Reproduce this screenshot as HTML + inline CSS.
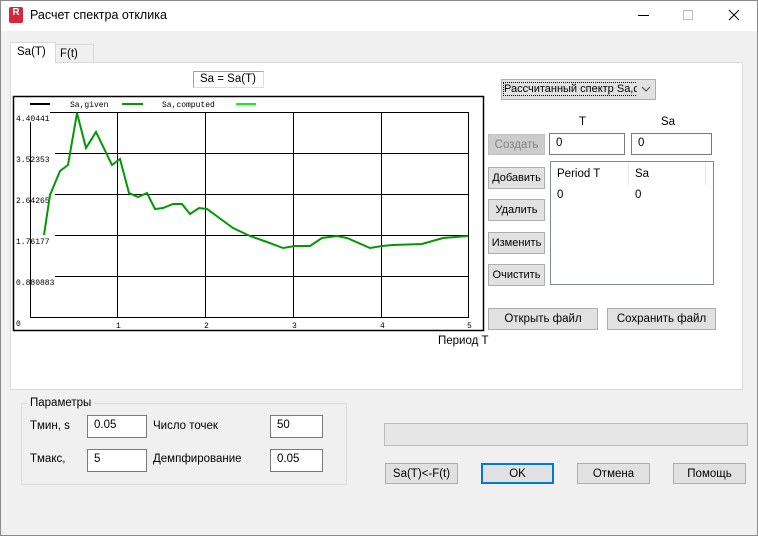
<!DOCTYPE html>
<html><head><meta charset="utf-8"><style>
*{box-sizing:border-box;margin:0;padding:0}
body{width:758px;height:536px;overflow:hidden;background:#f0f0f0;font-family:"Liberation Sans",sans-serif;font-size:11.5px;color:#000;position:relative}
.a{position:absolute;white-space:nowrap}
.btn{position:absolute;background:#e1e1e1;border:1px solid #adadad;text-align:center;font-size:11.5px;line-height:21px;white-space:nowrap;overflow:hidden}
.inp{position:absolute;background:#fff;border:1px solid #7a7a7a;padding-left:6px;line-height:19px;font-size:11.5px}
</style></head><body>
<div class="a" style="left:0;top:0;width:758px;height:536px;border:1px solid #8a8a8a"></div>
<div class="a" style="left:1px;top:1px;width:756px;height:30px;background:#fff"></div>
<div class="a" style="left:9px;top:7px;width:14px;height:16px;background:#d8263a;border-radius:2px;color:#fff;font-size:10px;font-weight:bold;text-align:center;line-height:12px">R</div>
<div class="a" style="left:30px;top:8px;font-size:12.5px">Расчет спектра отклика</div>
<div class="a" style="left:638px;top:15px;width:11px;height:1px;background:#000"></div>
<div class="a" style="left:683px;top:10px;width:10px;height:10px;border:1px solid #bbb"></div>
<svg class="a" style="left:728px;top:9px" width="12" height="12"><path d="M1 1L11 11M11 1L1 11" stroke="#000" stroke-width="1"/></svg>
<div class="a" style="left:10px;top:62px;width:733px;height:328px;background:#fff;border:1px solid #d9d9d9"></div>
<div class="a" style="left:55px;top:44px;width:39px;height:19px;background:#f0f0f0;border:1px solid #d9d9d9;padding:3px 4px">F(t)</div>
<div class="a" style="left:10px;top:42px;width:46px;height:21px;background:#fff;border:1px solid #d9d9d9;border-bottom:none;padding:3px 6px">Sa(T)</div>
<div class="a" style="left:193px;top:71px;width:71px;height:17px;border:1px solid #a0a0a0;border-right-color:#ddd;border-bottom-color:#ddd;padding:1px 6px;font-size:11.5px">Sa = Sa(T)</div>
<svg class="a" style="left:0;top:0" width="490" height="350">
<rect x="13.5" y="96.5" width="470" height="234" fill="#fff" stroke="#000" stroke-width="1.5"/>
<line x1="30" y1="104" x2="50" y2="104" stroke="#000" stroke-width="2"/>
<line x1="122" y1="104" x2="143" y2="104" stroke="#090" stroke-width="2"/>
<line x1="236" y1="104" x2="256" y2="104" stroke="#0f0" stroke-width="2"/>
<text x="70" y="107" font-family="Liberation Mono" font-size="8">Sa,given</text>
<text x="162" y="107" font-family="Liberation Mono" font-size="8">Sa,computed</text>
<g stroke="#000" stroke-width="1">
<line x1="50" y1="112.5" x2="469" y2="112.5"/>
<line x1="55" y1="153.5" x2="469" y2="153.5"/>
<line x1="55" y1="194.5" x2="469" y2="194.5"/>
<line x1="55" y1="235.5" x2="469" y2="235.5"/>
<line x1="55" y1="276.5" x2="469" y2="276.5"/>
<line x1="30" y1="317.5" x2="469" y2="317.5"/>
<line x1="30.5" y1="122" x2="30.5" y2="317"/>
<line x1="117.5" y1="112" x2="117.5" y2="317"/>
<line x1="205.5" y1="112" x2="205.5" y2="317"/>
<line x1="293.5" y1="112" x2="293.5" y2="317"/>
<line x1="381.5" y1="112" x2="381.5" y2="317"/>
<line x1="468.5" y1="112" x2="468.5" y2="317"/>
</g>
<g font-family="Liberation Mono" font-size="8">
<text x="16" y="121">4.40441</text>
<text x="16" y="162">3.52353</text>
<text x="16" y="203">2.64265</text>
<text x="16" y="244">1.76177</text>
<text x="16" y="285">0.880883</text>
<text x="16" y="326">0</text>
<text x="116" y="328">1</text>
<text x="204" y="328">2</text>
<text x="292" y="328">3</text>
<text x="380" y="328">4</text>
<text x="467" y="328">5</text>
</g>
<polyline fill="none" stroke="#090" stroke-width="2" points="44,235 50,195 60,171 68,165 77,113 86,148 96,132 112,165 120,159 129,193 138,197 147,193 155,209 163,208 173,204 182,204 190,214 199,208 207,209 218,217 233,228 250,236 267,242 283,248 295,246 310,246 322,238 337,236 347,238 370,248 382,246 393,245 422,244 443,238 468,236"/>
</svg>
<div class="a" style="left:438px;top:335px">Период T</div>
<div class="a" style="left:501px;top:79px;width:155px;height:21px;background:#e1e1e1;border:1px solid #adadad;padding:3px 2px;overflow:hidden;font-size:11px"><span style="outline:1px dotted #000">Рассчитанный спектр Sa,c</span></div>
<div class="a" style="left:637px;top:80px;width:18px;height:19px;background:#e1e1e1"></div>
<svg class="a" style="left:641px;top:86px" width="10" height="6"><path d="M1 1L5 5L9 1" fill="none" stroke="#444"/></svg>
<div class="a" style="left:579px;top:116px">T</div>
<div class="a" style="left:661px;top:116px">Sa</div>
<div class="btn" style="left:488px;top:134px;width:57px;height:21px;background:#cccccc;border-color:#bfbfbf;color:#838383">Создать</div>
<div class="inp" style="left:549px;top:133px;width:76px;height:22px">0</div>
<div class="inp" style="left:631px;top:133px;width:81px;height:22px">0</div>
<div class="a" style="left:550px;top:161px;width:164px;height:124px;background:#fff;border:1px solid #828790"></div>
<div class="a" style="left:557px;top:168px">Period T</div>
<div class="a" style="left:628px;top:163px;width:1px;height:22px;background:#e5e5e5"></div>
<div class="a" style="left:705px;top:163px;width:1px;height:22px;background:#e5e5e5"></div>
<div class="a" style="left:635px;top:168px">Sa</div>
<div class="a" style="left:557px;top:189px">0</div>
<div class="a" style="left:635px;top:189px">0</div>
<div class="btn" style="left:488px;top:167px;width:57px;height:22px;font-size:11px">Добавить</div>
<div class="btn" style="left:488px;top:199px;width:57px;height:22px;font-size:11px">Удалить</div>
<div class="btn" style="left:488px;top:232px;width:57px;height:22px;font-size:11px">Изменить</div>
<div class="btn" style="left:488px;top:264px;width:57px;height:22px;font-size:11px">Очистить</div>
<div class="btn" style="left:488px;top:308px;width:110px;height:22px">Открыть файл</div>
<div class="btn" style="left:607px;top:308px;width:109px;height:22px">Сохранить файл</div>
<div class="a" style="left:21px;top:403px;width:326px;height:82px;border:1px solid #dcdcdc"></div>
<div class="a" style="left:27px;top:397px;background:#f0f0f0;padding:0 3px">Параметры</div>
<div class="a" style="left:30px;top:420px">Tмин, s</div>
<div class="a" style="left:30px;top:453px">Tмакс,</div>
<div class="inp" style="left:87px;top:415px;width:60px;height:23px">0.05</div>
<div class="inp" style="left:87px;top:449px;width:60px;height:23px">5</div>
<div class="a" style="left:153px;top:420px">Число точек</div>
<div class="a" style="left:153px;top:453px">Демпфирование</div>
<div class="inp" style="left:270px;top:415px;width:53px;height:23px">50</div>
<div class="inp" style="left:270px;top:449px;width:53px;height:23px">0.05</div>
<div class="a" style="left:384px;top:423px;width:364px;height:23px;background:#e6e6e6;border:1px solid #bcbcbc"></div>
<div class="btn" style="left:385px;top:463px;width:73px;height:21px">Sa(T)&lt;-F(t)</div>
<div class="btn" style="left:481px;top:463px;width:73px;height:21px;border:2px solid #0078d7;line-height:19px">OK</div>
<div class="btn" style="left:577px;top:463px;width:73px;height:21px">Отмена</div>
<div class="btn" style="left:673px;top:463px;width:73px;height:21px">Помощь</div>
</body></html>
